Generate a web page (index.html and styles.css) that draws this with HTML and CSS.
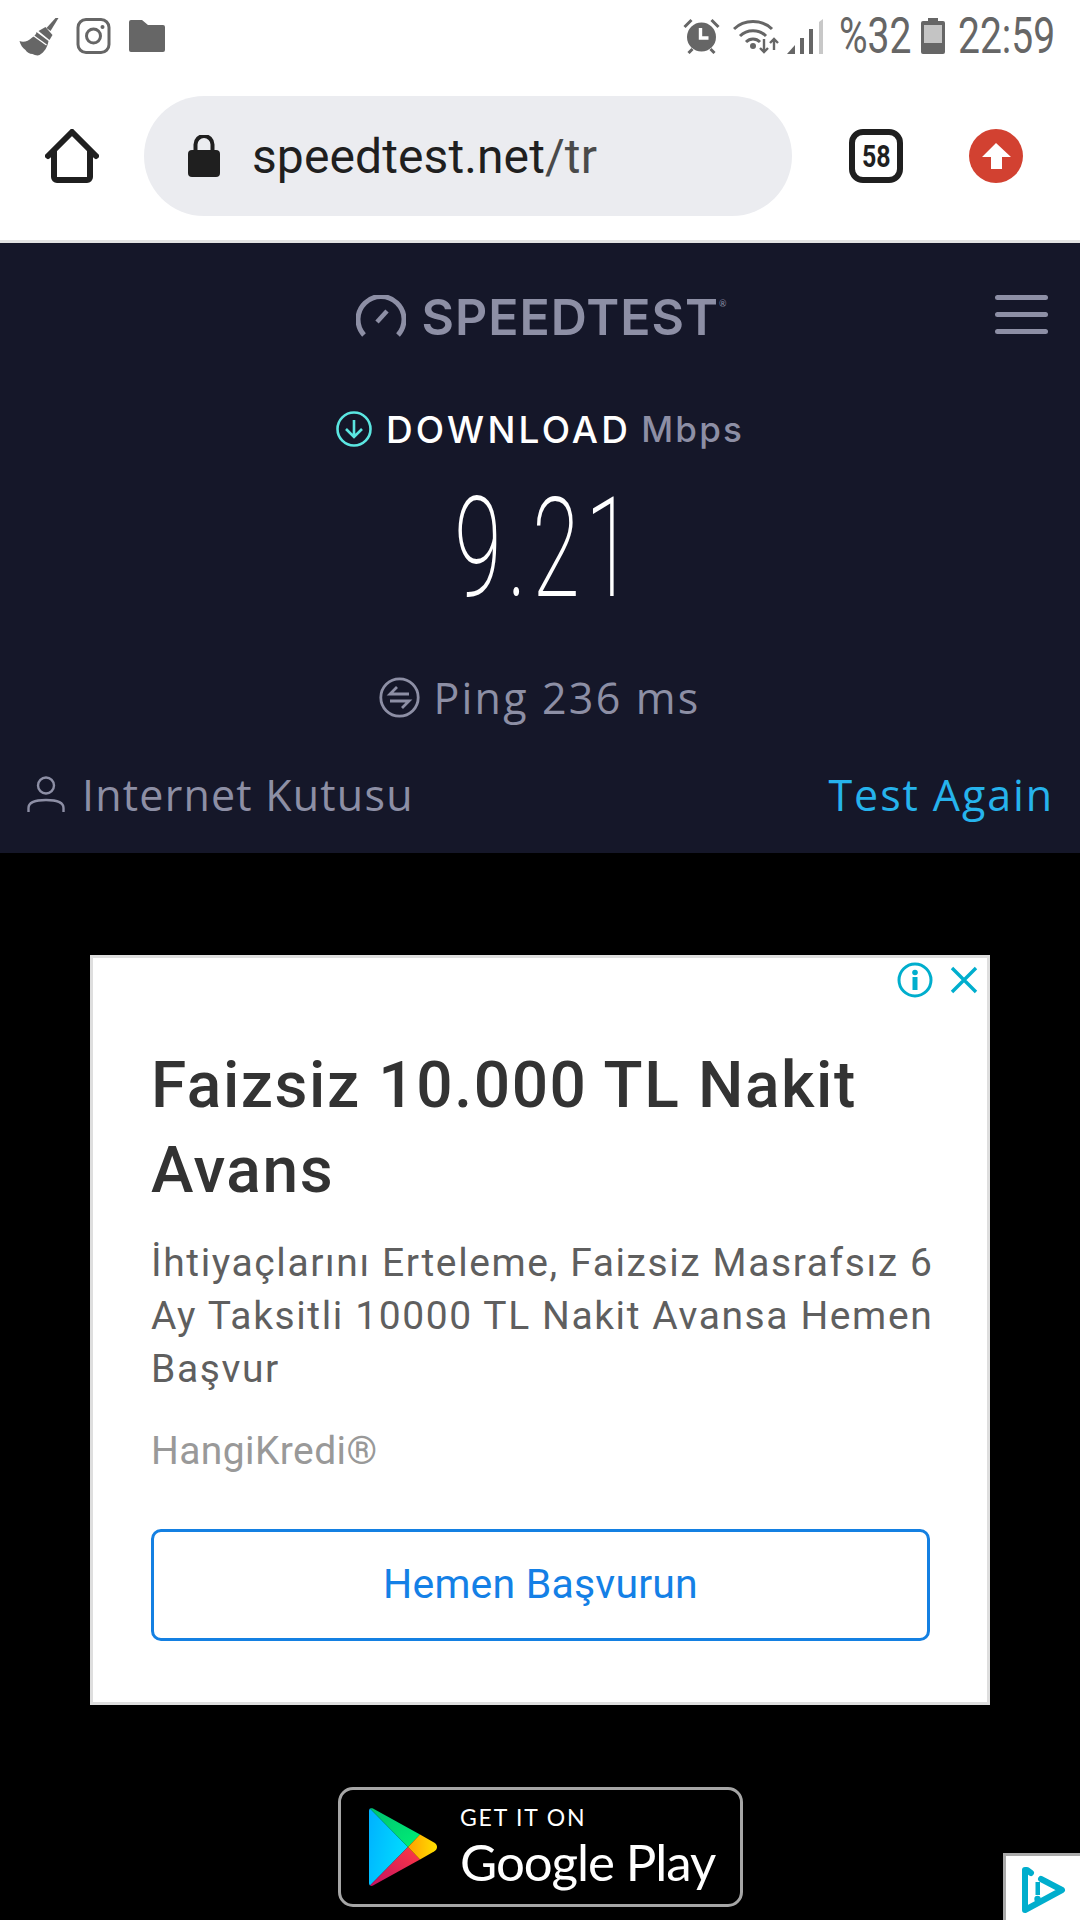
FILE: index.html
```html
<!DOCTYPE html>
<html lang="tr">
<head>
<meta charset="utf-8">
<title>Speedtest</title>
<link rel="stylesheet" href="styles.css">
</head>
<body>
<div class="page">
  <header class="status">
    <div class="status-left">
      <svg class="i-broom" viewBox="0 0 40 38"><path d="M40 0l-8 13-4-3 9-10z" fill="#666"/><path d="M27 9l7 8-3 5-11-9z" fill="#666"/><path d="M18 14l12 9c-1 6-4 11-9 14-2 1-5 0-7-1-3 0-6-2-7-4-3-2-5-5-6-9 4 2 9 0 12-3 3-2 5-4 5-6z" fill="#666"/><path d="M14 17l14 10" stroke="#fff" stroke-width="1.3"/></svg>
      <svg class="i-insta" viewBox="0 0 34 36"><rect x="1.500" y="1.500" width="31" height="33" rx="8" fill="none" stroke="#666" stroke-width="3"/><circle cx="17" cy="18" r="7" fill="none" stroke="#666" stroke-width="3"/><circle cx="26" cy="9" r="2" fill="#666"/></svg>
      <svg class="i-folder" viewBox="0 0 36 32"><path d="M2 0h11l6 5h15a2 2 0 0 1 2 2v23a2 2 0 0 1-2 2H2a2 2 0 0 1-2-2V2a2 2 0 0 1 2-2z" fill="#666"/></svg>
    </div>
    <div class="status-right">
      <svg class="i-alarm" viewBox="0 0 36 36"><circle cx="18" cy="19" r="14.500" fill="#666"/><path d="M1 9l7-7M35 9l-7-7M5 35l4-4M31 35l-4-4" stroke="#666" stroke-width="3"/><path d="M17 10v10h8" fill="none" stroke="#fff" stroke-width="3.400"/></svg>
      <svg class="i-wifi" viewBox="0 0 48 36"><path d="M1 11C11 1 29 1 39 11M7 18c7-7 19-7 26 0M13 24c4-4 10-4 14 0" fill="none" stroke="#666" stroke-width="3"/><circle cx="20" cy="28" r="3" fill="#666"/><path d="M31 21v13m-4-4l4 4 4-4M41 32V21m-4 4l4-4 4 4" fill="none" stroke="#666" stroke-width="2.400"/></svg>
      <svg class="i-signal" viewBox="0 0 36 36"><path d="M0 36l8-9v9z" fill="#666"/><rect x="13" y="20" width="4" height="16" fill="#666"/><rect x="22" y="11" width="4" height="25" fill="#666"/><path d="M32 4l4-3v35h-4z" fill="#c8c8c8"/></svg>
      <span class="st-text st-pct"><span class="st-squeeze">%32</span></span>
      <svg class="i-batt" viewBox="0 0 24 36"><path d="M7 0h10v3h5a2 2 0 0 1 2 2v29a2 2 0 0 1-2 2H2a2 2 0 0 1-2-2V5a2 2 0 0 1 2-2h5z" fill="#666"/><rect x="3" y="7" width="18" height="18" fill="#c4c4c4"/></svg>
      <span class="st-text st-time"><span class="st-squeeze">22:59</span></span>
    </div>
  </header>

  <nav class="toolbar">
    <svg class="i-home" viewBox="0 0 54 54"><path d="M3 27L27 3l24 24M9 22v26a3 3 0 0 0 3 3h30a3 3 0 0 0 3-3V22" fill="none" stroke="#1f1f1f" stroke-width="6" stroke-linecap="round" stroke-linejoin="round"/></svg>
    <div class="pill">
      <svg class="i-lock" viewBox="0 0 32 42"><rect y="15" width="32" height="27" rx="4" fill="#1f1f1f"/><path d="M7.500 17V9.500a8.500 8.500 0 0 1 17 0V17" fill="none" stroke="#1f1f1f" stroke-width="4"/></svg>
      <span class="url">speedtest.net<span class="url-path">/tr</span></span>
    </div>
    <div class="tabs"><span class="tabs-num">58</span></div>
    <svg class="i-update" viewBox="0 0 54 54"><circle cx="27" cy="27" r="27" fill="#d24131"/><path d="M27 14L13 28h9v12h11V28h9z" fill="#fff"/></svg>
  </nav>

  <main class="speed">
    <div class="brand">
      <div class="logo">
        <svg class="i-gauge" viewBox="0 0 50 42"><path d="M8 40A23 23 0 1 1 42 40" fill="none" stroke="#8d8fa5" stroke-width="5"/><path d="M21 27l10-11" stroke="#8d8fa5" stroke-width="4.500"/></svg>
        <span class="logo-text">SPEEDTEST</span><span class="logo-r">®</span>
      </div>
      <div class="burger"><i></i><i></i><i></i></div>
    </div>
    <div class="dl-row">
      <svg class="i-dl" viewBox="0 0 36 36"><circle cx="18" cy="18" r="16.500" fill="none" stroke="#5be6e1" stroke-width="2.600"/><path d="M18 9v17M10 18l8 8 8-8" fill="none" stroke="#5be6e1" stroke-width="2.600"/></svg>
      <span class="dl-label">DOWNLOAD</span>
      <span class="dl-unit">Mbps</span>
    </div>
    <div class="value"><span class="value-num">9.21</span></div>
    <div class="ping">
      <svg class="i-ping" viewBox="0 0 41 41"><circle cx="20.500" cy="20.500" r="18.700" fill="none" stroke="#8d8fa5" stroke-width="2.800"/><path d="M30 17H11l7-7M11 24h19l-7 7" fill="none" stroke="#8d8fa5" stroke-width="2.800"/></svg>
      <span>Ping 236 ms</span>
    </div>
    <div class="isp-row">
      <div class="isp">
        <svg class="i-user" viewBox="0 0 38 36"><circle cx="19" cy="9.500" r="8" fill="none" stroke="#8d8fa5" stroke-width="2.400"/><path d="M1.500 36v-4c0-6 8-8 17.500-8s17.500 2 17.500 8v4" fill="none" stroke="#8d8fa5" stroke-width="2.400"/></svg>
        <span>Internet Kutusu</span>
      </div>
      <span class="again">Test Again</span>
    </div>
  </main>

  <section class="black">
    <article class="ad">
      <div class="ad-tools">
        <svg class="i-info" viewBox="0 0 36 36"><circle cx="18" cy="18" r="16" fill="none" stroke="#00aecd" stroke-width="3"/><circle cx="18" cy="10.500" r="2.800" fill="#00aecd"/><path d="M18 15v13" stroke="#00aecd" stroke-width="5"/></svg>
        <svg class="i-close" viewBox="0 0 28 28"><path d="M2 2l24 24M26 2L2 26" stroke="#00aecd" stroke-width="3.400"/></svg>
      </div>
      <h1 class="ad-title">Faizsiz 10.000 TL Nakit Avans</h1>
      <p class="ad-body">İhtiyaçlarını Erteleme, Faizsiz Masrafsız 6 Ay Taksitli 10000 TL Nakit Avansa Hemen Başvur</p>
      <p class="ad-brand">HangiKredi®</p>
      <div class="ad-btn">Hemen Başvurun</div>
    </article>
    <div class="badge">
      <svg class="i-play" viewBox="0 0 70 78">
        <defs>
          <linearGradient id="pb" x1="0" y1="0" x2="1" y2="0.4"><stop offset="0" stop-color="#00b0ff"/><stop offset="1" stop-color="#00dcff"/></linearGradient>
          <linearGradient id="py" x1="0" y1="0" x2="1" y2="0"><stop offset="0" stop-color="#ffa000"/><stop offset="1" stop-color="#ffe000"/></linearGradient>
          <linearGradient id="pg" x1="0" y1="0" x2="1" y2="1"><stop offset="0" stop-color="#00c070"/><stop offset="1" stop-color="#00f076"/></linearGradient>
          <linearGradient id="pr" x1="1" y1="0" x2="0" y2="1"><stop offset="0" stop-color="#ff3a44"/><stop offset="1" stop-color="#c31162"/></linearGradient>
        </defs>
        <path d="M1 3v72c0 1 .5 2 1 2.500L40 39 2 .5C1.500 1 1 2 1 3z" fill="url(#pb)"/>
        <path d="M2 .5c1-.5 2-.5 3 0l47 26-12 12.500z" fill="url(#pg)"/>
        <path d="M2 77.500c1 .5 2 .5 3 0l47-26L40 39z" fill="url(#pr)"/>
        <path d="M52 26.500l14 8c4 2.500 4 6.500 0 9l-14 8L40 39z" fill="url(#py)"/>
      </svg>
      <div class="badge-text">
        <span class="badge-top">GET IT ON</span>
        <span class="badge-main">Google Play</span>
      </div>
    </div>
    <div class="adchoice">
      <svg class="i-choice" viewBox="0 0 50 50"><path d="M5 4h2l4 3M5 4v40l37-20-21-11" fill="none" stroke="#00aecd" stroke-width="6" stroke-linecap="round" stroke-linejoin="round"/><rect x="15.500" y="16" width="4.500" height="13" fill="#00aecd"/><circle cx="17.500" cy="33" r="3.200" fill="#00aecd"/></svg>
    </div>
  </section>
</div>
</body>
</html>
```
FILE: styles.css
```css
* { box-sizing: border-box; }
html, body { margin: 0; padding: 0; }
body { width: 1080px; height: 1920px; overflow: hidden; background: #000; font-family: "Roboto", sans-serif; }
svg { display: block; flex: none; }
.page { width: 1080px; height: 1920px; display: flex; flex-direction: column; }

.status { height: 72px; background: #fff; display: flex; justify-content: space-between; padding: 18px 25px 0 18px; }
.status-left { display: flex; align-items: flex-start; }
.i-broom { width: 41px; height: 38px; }
.i-insta { width: 35px; height: 36px; margin-left: 17px; }
.i-folder { width: 36px; height: 32px; margin: 2px 0 0 18px; }
.status-right { display: flex; align-items: flex-start; }
.i-alarm { width: 37px; height: 36px; }
.i-wifi { width: 48px; height: 36px; margin-left: 13px; }
.i-signal { width: 36px; height: 36px; margin-left: 6px; }
.st-text { color: #666; font-size: 50px; line-height: 36px; height: 36px; }
.st-squeeze { display: inline-block; transform: scaleX(0.78); transform-origin: left center; white-space: nowrap; }
.st-pct { margin-left: 16px; width: 69px; }
.i-batt { width: 24px; height: 36px; margin-left: 13px; }
.st-time { margin-left: 13px; width: 97px; }

.toolbar { height: 171px; background: #fff; border-bottom: 3px solid #e2e2e2; display: flex; align-items: flex-start; padding: 24px 0 0 45px; }
.i-home { width: 54px; height: 54px; margin-top: 33px; }
.pill { width: 648px; height: 120px; margin-left: 45px; border-radius: 60px; background: #ebecf0; display: flex; align-items: center; padding-left: 44px; }
.i-lock { width: 32px; height: 42px; }
.url { margin-left: 32px; font-size: 48px; color: #1f1f1f; letter-spacing: 0.1px; }
.url-path { color: #4a4a4a; }
.tabs { width: 54px; height: 54px; margin: 33px 0 0 57px; border: 6px solid #1f1f1f; border-radius: 14px; display: flex; align-items: center; justify-content: center; }
.tabs-num { display: inline-block; font-weight: 700; font-size: 32px; color: #1f1f1f; transform: scaleX(0.78); }
.i-update { width: 56px; height: 54px; margin: 33px 0 0 65px; }

.speed { height: 610px; background: #151729; display: flex; flex-direction: column; font-family: "Lato", sans-serif; color: #8d8fa5; }
.brand { height: 96px; position: relative; display: flex; justify-content: center; padding-top: 52px; }
.logo { display: flex; align-items: flex-start; margin-left: 3px; }
.i-gauge { width: 50px; height: 42px; }
.logo-text { margin-left: 15px; font-family: "Inter", sans-serif; font-weight: 600; font-size: 50px; line-height: 44px; letter-spacing: 1px; }
.logo-r { font-size: 9px; line-height: 18px; }
.burger { position: absolute; left: 995px; top: 52px; width: 53px; display: flex; flex-direction: column; gap: 12px; }
.burger i { display: block; height: 5px; background: #8d8fa5; border-radius: 3px; }
.dl-row { margin-top: 72px; height: 36px; display: flex; align-items: center; justify-content: center; }
.i-dl { width: 36px; height: 36px; }
.dl-label { margin-left: 14px; color: #fff; font-family: "Inter", sans-serif; font-weight: 500; font-size: 37px; letter-spacing: 3.2px; }
.dl-unit { margin-left: 10px; font-family: "Inter", sans-serif; font-weight: 500; font-size: 35px; letter-spacing: 2.2px; }
.value { height: 112px; margin-top: 46px; padding-left: 12px; display: flex; justify-content: center; align-items: center; }
.value-num { color: #fff; font-family: "Roboto", sans-serif; font-weight: 200; font-size: 139px; line-height: 112px; letter-spacing: 9px; transform: scaleX(0.62); }
.ping { margin-top: 72px; height: 41px; display: flex; align-items: center; justify-content: center; font-family: "Open Sans", sans-serif; font-size: 43px; letter-spacing: 2.2px; }
.i-ping { width: 41px; height: 41px; margin-right: 13px; }
.isp-row { margin-top: 56px; display: flex; justify-content: space-between; align-items: center; padding: 0 26px 0 27px; height: 40px; font-family: "Open Sans", sans-serif; font-size: 43px; letter-spacing: 1.2px; }
.isp { display: flex; align-items: center; }
.i-user { width: 38px; height: 36px; margin-right: 17px; }
.again { color: #26b3ec; letter-spacing: 1.9px; }

.black { flex: 1; position: relative; background: #000; padding: 102px 90px 0; }
.ad { position: relative; height: 750px; background: #fff; border: 3px solid #dedede; padding: 0 48px 0 58px; }
.ad-tools { position: absolute; top: 4px; right: 9px; display: flex; align-items: center; gap: 17px; }
.i-info { width: 36px; height: 36px; }
.i-close { width: 28px; height: 28px; }
.ad-title { margin: 85px 0 0; font-weight: 500; font-size: 64px; line-height: 85px; color: #333; letter-spacing: 1.6px; }
.ad-body { margin: 24px 0 0; font-size: 39px; line-height: 53px; color: #5f5f5f; letter-spacing: 1.6px; }
.ad-brand { margin: 30px 0 0; font-size: 39px; line-height: 50px; color: #999; letter-spacing: 0.4px; }
.ad-btn { margin-top: 53px; width: 779px; height: 112px; padding-bottom: 3px; border: 3px solid #1480e2; border-radius: 10px; display: flex; align-items: center; justify-content: center; font-size: 41px; letter-spacing: 0.2px; color: #1480e6; }

.badge { position: absolute; left: 338px; top: 934px; width: 405px; height: 120px; background: #000; border: 3px solid #a6a6a6; border-radius: 15px; display: flex; align-items: center; padding-left: 27px; }
.i-play { width: 70px; height: 78px; }
.badge-text { display: flex; flex-direction: column; margin-left: 22px; color: #fff; font-family: "Lato", sans-serif; }
.badge-top { font-size: 23px; line-height: 28px; letter-spacing: 1.8px; }
.badge-main { font-size: 51px; line-height: 61px; letter-spacing: -1.05px; }

.adchoice { position: absolute; right: 0; bottom: 0; width: 77px; height: 67px; background: #fff; border-left: 3px solid #aaa; border-top: 3px solid #aaa; padding: 10px 0 0 14px; }
.i-choice { width: 50px; height: 50px; }
```
